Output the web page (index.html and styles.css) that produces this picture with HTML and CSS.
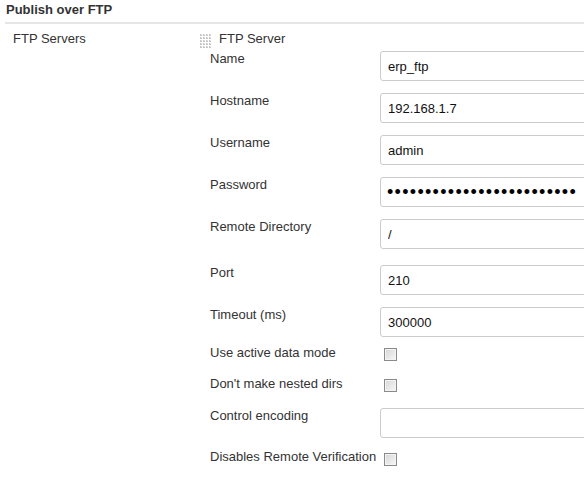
FILE: index.html
```html
<!DOCTYPE html>
<html lang="en">
<head>
  <meta charset="UTF-8">
  <title>Publish over FTP</title>
  <link rel="stylesheet" href="styles.css">
</head>
<body>

  <div class="section-header">Publish over FTP</div>

  <div class="section">
    <div class="section-label">FTP Servers</div>

    <div class="server">
      <div class="server-head">
        <svg class="grip" width="11" height="14" viewBox="0 0 11 14">
          <defs>
            <pattern id="dots" width="3" height="3" patternUnits="userSpaceOnUse">
              <rect x="0" y="0" width="2" height="2" fill="#c4c4c4"/>
              <rect x="1" y="0" width="1" height="1" fill="#e6e6e6"/>
            </pattern>
          </defs>
          <rect width="11" height="14" fill="url(#dots)"/>
        </svg>
        <span>FTP Server</span>
      </div>

      <div class="fields">
        <div class="row text-row">
          <label>Name</label>
          <input type="text" value="erp_ftp">
        </div>
        <div class="row text-row">
          <label>Hostname</label>
          <input type="text" value="192.168.1.7">
        </div>
        <div class="row text-row">
          <label>Username</label>
          <input type="text" value="admin">
        </div>
        <div class="row text-row">
          <label>Password</label>
          <input type="password" value="abcdefghijklmnopqrstuvwxy">
        </div>
        <div class="row text-row remote-dir">
          <label>Remote Directory</label>
          <input type="text" value="/">
        </div>
        <div class="row text-row">
          <label>Port</label>
          <input type="text" value="210">
        </div>
        <div class="row text-row timeout">
          <label>Timeout (ms)</label>
          <input type="text" value="300000">
        </div>
        <div class="row check-row">
          <label>Use active data mode</label>
          <input type="checkbox">
        </div>
        <div class="row check-row nested">
          <label>Don't make nested dirs</label>
          <input type="checkbox">
        </div>
        <div class="row text-row encoding">
          <label>Control encoding</label>
          <input type="text" value="">
        </div>
        <div class="row check-row">
          <label>Disables Remote Verification</label>
          <input type="checkbox" class="last-check">
        </div>
      </div>
    </div>
  </div>

</body>
</html>
```

FILE: styles.css
```css
html, body {
  margin: 0px;
  padding: 0px;
  overflow: hidden;
}
body {
  background: #fff;
  color: #333;
  font-family: "Liberation Sans", Arial, sans-serif;
  font-size: 13px;
  line-height: 16px;
}
.section-header {
  margin-left: 5px;
  padding: 2px 0px 4px 1px;
  font-weight: bold;
  border-bottom: 2px solid #e6e6e6;
}
.section {
  display: grid;
  grid-template-columns: 200px 1fr;
  margin-top: 7px;
}
.section-label {
  padding-left: 13px;
}
.server-head {
  display: flex;
  align-items: center;
  gap: 8px;
  height: 16px;
}
.grip {
  display: block;
  margin-top: 3px;
}
.fields {
  margin-left: 10px;
  margin-top: 4px;
}
.row {
  display: grid;
  grid-template-columns: 170px 260px;
  align-items: start;
}
.text-row {
  margin-bottom: 12px;
}
.remote-dir {
  margin-bottom: 16px;
}
.timeout {
  margin-bottom: 8px;
}
.encoding {
  margin-bottom: 11px;
}
.check-row {
  margin-bottom: 15px;
}
.nested {
  margin-bottom: 16px;
}
label {
  white-space: nowrap;
}
input[type="text"], input[type="password"] {
  box-sizing: border-box;
  width: 260px;
  height: 30px;
  margin: 0px;
  padding: 0px 7px;
  border: 1px solid #ccc;
  border-radius: 3px;
  font-family: "Liberation Sans", Arial, sans-serif;
  font-size: 13px;
  color: #111;
  background: #fff;
}
input[type="password"] {
  padding-left: 6px;
  font-size: 18px;
  letter-spacing: 1.3px;
  color: #000;
}
input[type="checkbox"] {
  appearance: none;
  -webkit-appearance: none;
  box-sizing: border-box;
  width: 13px;
  height: 13px;
  margin: 3px 0px 0px 4px;
  border: 1px solid #8a8a8a;
  box-shadow: inset 0 0 0 1px #f4f4f4;
  background: linear-gradient(135deg, #d6d6d6, #f7f7f7);
}
.last-check {
  margin-top: 4px !important;
}
```
